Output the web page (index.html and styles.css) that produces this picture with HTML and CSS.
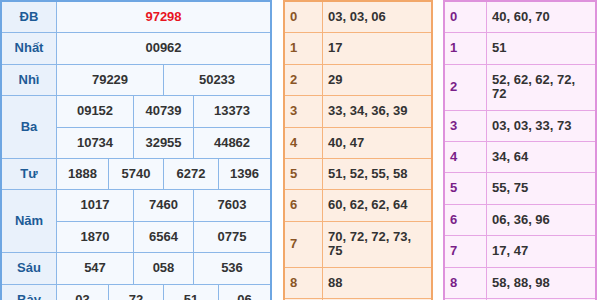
FILE: index.html
```html
<!DOCTYPE html>
<html lang="vi">
<head>
<meta charset="utf-8">
<link rel="stylesheet" href="styles.css">
</head>
<body>
<div class="page">
  <div class="kq">
    <div class="lb">ĐB</div><div class="v s6 red">97298</div>
    <div class="lb">Nhất</div><div class="v s6">00962</div>
    <div class="lb">Nhì</div><div class="v s3">79229</div><div class="v s3">50233</div>
    <div class="lb r2">Ba</div><div class="v s2">09152</div><div class="v s2">40739</div><div class="v s2">13373</div>
    <div class="v s2">10734</div><div class="v s2">32955</div><div class="v s2">44862</div>
    <div class="lb">Tư</div><div class="v">1888</div><div class="v s2">5740</div><div class="v s2">6272</div><div class="v">1396</div>
    <div class="lb r2">Năm</div><div class="v s2">1017</div><div class="v s2">7460</div><div class="v s2">7603</div>
    <div class="v s2">1870</div><div class="v s2">6564</div><div class="v s2">0775</div>
    <div class="lb">Sáu</div><div class="v s2">547</div><div class="v s2">058</div><div class="v s2">536</div>
    <div class="lb">Bảy</div><div class="v">03</div><div class="v s2">72</div><div class="v s2">51</div><div class="v">06</div>
  </div>
  <div class="lt dau">
    <div class="h">0</div><div class="n">03, 03, 06</div>
    <div class="h">1</div><div class="n">17</div>
    <div class="h">2</div><div class="n">29</div>
    <div class="h">3</div><div class="n">33, 34, 36, 39</div>
    <div class="h">4</div><div class="n">40, 47</div>
    <div class="h">5</div><div class="n">51, 52, 55, 58</div>
    <div class="h">6</div><div class="n">60, 62, 62, 64</div>
    <div class="h">7</div><div class="n">70, 72, 72, 73, 75</div>
    <div class="h">8</div><div class="n">88</div>
    <div class="h">9</div><div class="n">96, 98</div>
  </div>
  <div class="lt duoi">
    <div class="h">0</div><div class="n">40, 60, 70</div>
    <div class="h">1</div><div class="n">51</div>
    <div class="h">2</div><div class="n">52, 62, 62, 72, 72</div>
    <div class="h">3</div><div class="n">03, 03, 33, 73</div>
    <div class="h">4</div><div class="n">34, 64</div>
    <div class="h">5</div><div class="n">55, 75</div>
    <div class="h">6</div><div class="n">06, 36, 96</div>
    <div class="h">7</div><div class="n">17, 47</div>
    <div class="h">8</div><div class="n">58, 88, 98</div>
    <div class="h">9</div><div class="n">29, 39</div>
  </div>
</div>
</body>
</html>
```

FILE: styles.css
```css
html, body {
  margin: 0;
  padding: 0;
  background: #ffffff;
  height: 300px;
  overflow: hidden;
}
body {
  font-family: "Liberation Sans", Arial, sans-serif;
  font-size: 13px;
  font-weight: bold;
  color: #333333;
}
.page {
  display: flex;
  align-items: flex-start;
}
.kq {
  display: grid;
  grid-template-columns: 54px 51px 24px 29px 29px 24px 51px;
  gap: 1px;
  padding: 2px;
  background: #8bb7e8;
  border: 0;
  box-shadow: inset 0 0 0 2px #6ea6e2;
  width: 272px;
  box-sizing: border-box;
}
.kq > div {
  display: flex;
  align-items: center;
  justify-content: center;
  padding: 8px 0;
  line-height: 14.4px;
}
.kq .lb {
  background: #e9f1fb;
  color: #1d5b96;
}
.kq .v {
  background: #f5f9fe;
}
.kq .r2 { grid-row: span 2; }
.kq .s2 { grid-column: span 2; }
.kq .s3 { grid-column: span 3; }
.kq .s6 { grid-column: span 6; }
.kq .red { color: #e8141f; }

.lt {
  display: grid;
  gap: 1px;
  padding: 2px;
  box-sizing: border-box;
}
.lt > div {
  display: flex;
  align-items: center;
  padding: 8px 5px;
  line-height: 14.4px;
}
.dau {
  margin-left: 11px;
  width: 150px;
  grid-template-columns: 37px 1fr;
  background: #f6b37c;
  box-shadow: inset 0 0 0 2px #f2a769;
}
.dau > div { background: #fdeee3; }
.dau .h { color: #8a5526; }
.duoi {
  margin-left: 10px;
  width: 154px;
  grid-template-columns: 41px 1fr;
  background: #e6a5e4;
  box-shadow: inset 0 0 0 2px #de92dc;
}
.duoi > div { background: #fdf0fc; }
.duoi .h { color: #7a1e88; }
```
